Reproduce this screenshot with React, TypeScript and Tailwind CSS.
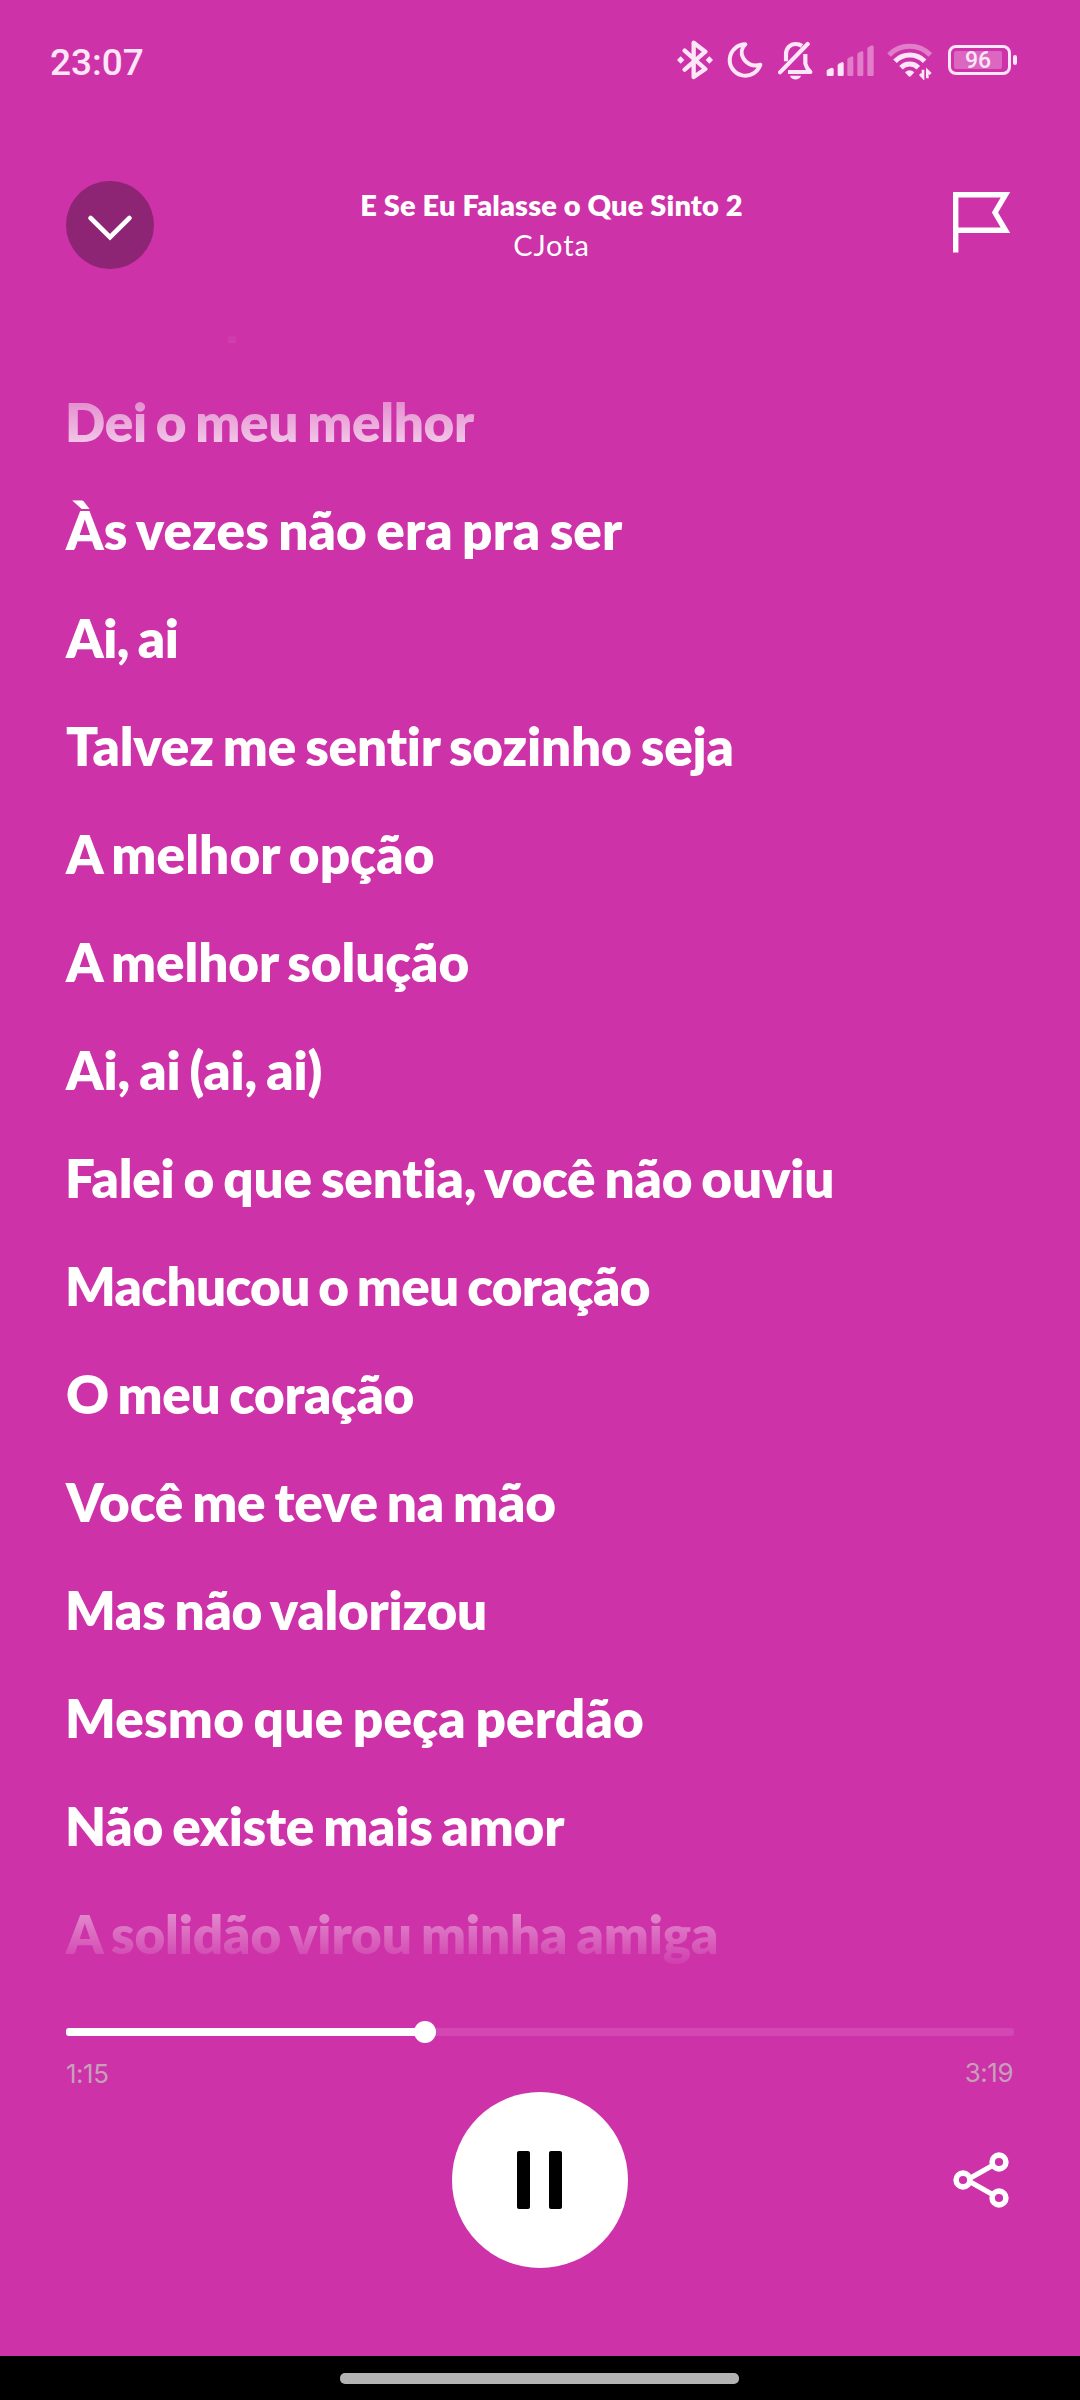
import React from 'react';

type Line = { text: string; cls: string };

const lyrics: Line[] = [
  { text: 'Dei o meu melhor', cls: 'tracking-[-0.3px]' },
  { text: 'Às vezes não era pra ser', cls: 'pl-[1px] tracking-[0.12px]' },
  { text: 'Ai, ai', cls: 'pl-[1px] tracking-[-0.5px]' },
  { text: 'Talvez me sentir sozinho seja', cls: 'pl-[1px] tracking-[-0.17px]' },
  { text: 'A melhor opção', cls: 'pl-[1px] tracking-[0.1px]' },
  { text: 'A melhor solução', cls: 'pl-[1px] tracking-[-0.08px]' },
  { text: 'Ai, ai (ai, ai)', cls: 'pl-[1px] tracking-[-0.16px]' },
  { text: 'Falei o que sentia, você não ouviu', cls: 'tracking-[-0.2px]' },
  { text: 'Machucou o meu coração', cls: 'tracking-[-0.7px]' },
  { text: 'O meu coração', cls: 'pl-[1px] tracking-[-0.4px]' },
  { text: 'Você me teve na mão', cls: 'pl-[1px] tracking-[-0.2px]' },
  { text: 'Mas não valorizou', cls: 'tracking-[-0.27px]' },
  { text: 'Mesmo que peça perdão', cls: 'tracking-[0.2px]' },
  { text: 'Não existe mais amor', cls: 'tracking-[-0.23px]' },
  { text: 'A solidão virou minha amiga', cls: 'pl-[1px] tracking-[-0.12px]' },
];

function StatusBar() {
  return (
    <div className="flex h-[120px] shrink-0 items-center justify-between pr-[63px] pl-[50px] text-[#fde6f7]">
      <span className="pt-[4px] font-[Roboto,sans-serif] text-[37px] leading-none font-medium">23:07</span>
      <div className="flex items-center">
        <svg className="h-[40px] w-[36px]" viewBox="51 60 108 120" fill="none" stroke="currentColor" strokeWidth="13" strokeLinecap="round" strokeLinejoin="round">
          <path d="M74 92 L136 147 L101 171 V68 L136 95 L74 149" />
          <path d="M62 109 L73 120 L62 131 L51 120 Z M148 109 L159 120 L148 131 L137 120 Z" fill="currentColor" stroke="none" />
        </svg>
        <svg className="ml-[14px] h-[40px] w-[36px]" viewBox="201 60 108 120" fill="none" stroke="currentColor" strokeWidth="12" strokeLinejoin="round">
          <path d="M256 73 A47 47 0 1 0 301 134 C278 141 258 131 249 113 C242 99 245 83 256 73 Z" />
        </svg>
        <svg className="ml-[15px] h-[40px] w-[36px]" viewBox="354 60 108 120" fill="none" stroke="currentColor" strokeWidth="12.5" strokeLinecap="round" strokeLinejoin="round">
          <path d="M360 157 L443 72" />
          <path d="M378 124 V103 C378 84 391 72 407 72 C415 72 421 74 426 78" strokeLinecap="butt" />
          <path d="M436 102 V131 C438 140 444 149 451 156 H384" strokeLinecap="butt" />
          <path d="M390 167 H423 C419 182 394 182 390 167 Z" fill="currentColor" stroke="none" />
        </svg>
        <svg className="ml-[12px] h-[40px] w-[49px]" viewBox="498 60 147 120" fill="currentColor">
          <path d="M500 152 Q502 147 515 143 Q521 143 521 148 V164 Q521 168 517 168 H504 Q500 168 500 164 Z" />
          <path d="M533 134 Q538 129 547 126 Q551 126 551 131 V164 Q551 168 547 168 H537 Q533 168 533 164 Z" />
          <g opacity="0.42">
            <path d="M562 117 Q567 112 576 109 Q580 109 580 114 V164 Q580 168 576 168 H566 Q562 168 562 164 Z" />
            <path d="M592 101 Q597 96 606 93 Q610 93 610 98 V164 Q610 168 606 168 H596 Q592 168 592 164 Z" />
            <path d="M622 84 Q627 79 636 76 Q641 76 641 81 V164 Q641 168 637 168 H626 Q622 168 622 164 Z" />
          </g>
        </svg>
        <svg className="ml-[11px] h-[40px] w-[48px]" viewBox="678 60 144 120" fill="none" stroke="currentColor" strokeWidth="15">
          <path d="M687 105 A87 87 0 0 1 811 105" opacity="0.42" />
          <path d="M705 124 A62 62 0 0 1 794 124" />
          <path d="M723 143 A37 37 0 0 1 775 143" />
          <path d="M735 157 Q749 145 763 157 L753 168 Q749 172 745 168 Z" fill="currentColor" stroke="none" />
          <path d="M789 149 V172 L780 162 M802 175 V152 L812 162" strokeWidth="8" />
        </svg>
        <div className="ml-[14px] flex items-center gap-[2px]">
          <div className="flex h-[30px] w-[63px] rounded-[8px] border-[3px] border-[#fde6f7] p-[3px]">
            <div className="flex w-[48px] items-center justify-center rounded-[2px] bg-[#fde6f7]/30">
              <span className="pt-px font-[Roboto,sans-serif] text-[23px] leading-none font-medium">96</span>
            </div>
          </div>
          <div className="h-[10px] w-[4px] rounded-[2px] bg-[#fde6f7]" />
        </div>
      </div>
    </div>
  );
}

function Header() {
  return (
    <header className="mt-[61px] flex h-[88px] shrink-0 items-center pr-[69px] pl-[66px]">
      <button className="flex size-[88px] items-center justify-center rounded-full bg-[#8d2474]">
        <svg className="size-[44px]" viewBox="88 203 44 44" fill="none" stroke="#fff" strokeWidth="4.6" strokeLinecap="round">
          <path d="M90.6 218 L110 237.2 L129.4 218" />
        </svg>
      </button>
      <div className="flex flex-1 flex-col items-center pr-[2px] text-[29px] leading-[40px] text-white">
        <h1 className="font-extrabold tracking-[0.12px]">E Se Eu Falasse o Que Sinto 2</h1>
        <p className="font-normal tracking-[0.9px]">CJota</p>
      </div>
      <svg className="h-[66px] w-[60px]" viewBox="951.5 192 60 66" fill="none" stroke="#fff" strokeWidth="5.4" strokeMiterlimit="10">
        <path d="M956.2 252.6 V194.7 H1006 L995.5 212.5 L1006 230.3 H956.2" />
      </svg>
    </header>
  );
}

function Lyrics() {
  return (
    <main className="relative mt-[62px] h-[1642px] shrink-0 overflow-hidden pt-[37px] pl-[65px] [mask-image:linear-gradient(to_bottom,transparent_0px,#000_154px,#000_1504px,transparent_1642px)]">
      <div className="absolute top-[5px] left-[228px] h-[7px] w-[8px] bg-white" />
      {lyrics.map((l) => (
        <p
          key={l.text}
          className={`h-[108px] text-[53px] leading-[108px] font-extrabold whitespace-nowrap text-white [word-spacing:-3px] ${l.cls}`}
        >
          {l.text}
        </p>
      ))}
    </main>
  );
}

function Player() {
  const progress = (425.3 - 66) / 948;
  return (
    <footer className="flex flex-1 flex-col px-[66px] pt-[48px]">
      <div className="flex h-[22px] items-center">
        <div className="relative h-[8px] w-full rounded-[3px] bg-white/10">
          <div className="h-full rounded-[3px] bg-white" style={{ width: `${progress * 100}%` }} />
          <div className="absolute top-[-7px] ml-[-11px] size-[22px] rounded-full bg-white" style={{ left: `${progress * 100}%` }} />
        </div>
      </div>
      <div className="mt-[12px] flex h-[37px] justify-between pr-px font-[Inter,sans-serif] text-[26px] leading-[35px] tracking-[-0.5px] text-[#c5a0bb]">
        <span className="pt-px">1:15</span>
        <span>3:19</span>
      </div>
      <div className="grid h-[176px] grid-cols-3 items-center">
        <span />
        <button className="flex size-[176px] items-center justify-center gap-[19px] justify-self-center rounded-full bg-white pr-px">
          <span className="h-[58px] w-[13px] rounded-[2px] bg-black" />
          <span className="h-[58px] w-[13px] rounded-[2px] bg-black" />
        </button>
        <svg className="mr-[4px] h-[60px] w-[58px] justify-self-end" viewBox="952 2150 58 60" fill="none" stroke="#fff" strokeWidth="5.6">
          <circle cx="963" cy="2180" r="6.9" />
          <circle cx="999" cy="2162" r="6.9" />
          <circle cx="999" cy="2198" r="6.9" />
          <path d="M969.5 2178.5 L993 2165.2 M969.5 2181.5 L993 2194.8" strokeWidth="5" />
        </svg>
      </div>
    </footer>
  );
}

export default function App() {
  return (
    <div className="flex h-[2400px] w-[1080px] flex-col overflow-hidden bg-[#cd32a8] font-[Lato,sans-serif]">
      <StatusBar />
      <Header />
      <Lyrics />
      <Player />
      <div className="flex h-[44px] shrink-0 justify-center bg-black pt-[17px] pr-px">
        <div className="h-[11px] w-[399px] rounded-[5px] bg-[#b3b3b3]" />
      </div>
    </div>
  );
}
